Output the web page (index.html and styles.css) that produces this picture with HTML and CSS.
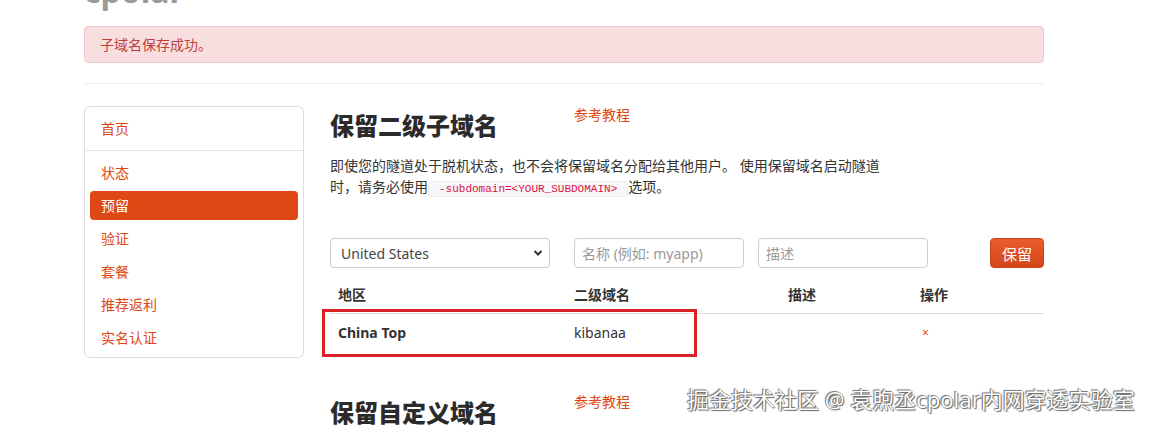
FILE: index.html
```html
<!DOCTYPE html>
<html lang="zh-CN">
<head>
    <meta charset="UTF-8">
    <title>cpolar - 保留</title>
    <link rel="stylesheet" href="styles.css">
</head>
<body>

<div class="container">
    <div class="brand">cpolar</div>

    <div class="alert">子域名保存成功。</div>

    <hr class="divider">

    <div class="row">
        <div class="sidebar">
            <a class="side-home" href="#">首页</a>
            <div class="side-list">
                <a class="side-item" href="#">状态</a>
                <a class="side-item active" href="#">预留</a>
                <a class="side-item" href="#">验证</a>
                <a class="side-item" href="#">套餐</a>
                <a class="side-item" href="#">推荐返利</a>
                <a class="side-item" href="#">实名认证</a>
            </div>
        </div>

        <div class="main">
            <div class="title-row">
                <h2>保留二级子域名</h2>
                <a class="guide" href="#">参考教程</a>
            </div>
            <p class="intro">即使您的隧道处于脱机状态，也不会将保留域名分配给其他用户。 使用保留域名启动隧道时，请务必使用<code>-subdomain=&lt;YOUR_SUBDOMAIN&gt;</code>选项。</p>

            <div class="form-row">
                <div class="select-wrap">
                    <select class="region">
                        <option>United States</option>
                        <option>China Top</option>
                        <option>China VIP</option>
                    </select>
                    <svg class="chevron" width="10" height="8" viewBox="0 0 10 8">
                        <path d="M1.5 2 L5 5.5 L8.5 2" fill="none" stroke="#333" stroke-width="2"/>
                    </svg>
                </div>
                <input class="field name" type="text" placeholder="名称 (例如: myapp)">
                <input class="field desc" type="text" placeholder="描述">
                <button class="btn-save">保留</button>
            </div>

            <div class="table-wrap">
                <table class="domains">
                    <thead>
                        <tr>
                            <th class="col-region">地区</th>
                            <th class="col-name">二级域名</th>
                            <th class="col-desc">描述</th>
                            <th>操作</th>
                        </tr>
                    </thead>
                    <tbody>
                        <tr>
                            <td><strong>China Top</strong></td>
                            <td>kibanaa</td>
                            <td></td>
                            <td><a class="remove" href="#">×</a></td>
                        </tr>
                    </tbody>
                </table>
                <div class="highlight"></div>
            </div>

            <div class="title-row second">
                <h2>保留自定义域名</h2>
                <a class="guide" href="#">参考教程</a>
            </div>
        </div>
    </div>
</div>

<div class="watermark">掘金技术社区 @ 袁煦丞cpolar内网穿透实验室</div>

</body>
</html>
```

FILE: styles.css
```css
html, body {
    overflow: hidden;
}

body {
    margin: 0;
    font-family: "Noto Sans", "Noto Sans CJK SC", sans-serif;
    font-size: 14px;
    line-height: 20px;
    color: #333;
    background-color: #fff;
}

a {
    color: #dd4814;
    text-decoration: none;
}

.container {
    width: 960px;
    margin-left: 84px;
}

.brand {
    height: 32px;
    margin-top: -25px;
    font-size: 32px;
    line-height: 32px;
    font-weight: bold;
    color: #9a9a9a;
}

.alert {
    margin-top: 19px;
    padding: 8px 35px 8px 15px;
    line-height: 19px;
    background-color: #f8dede;
    border: 1px solid #efc9cf;
    border-radius: 4px;
    color: #c0403a;
}

.divider {
    margin: 20px 0 0;
    border: 0;
    border-top: 1px solid #f0f0f0;
    height: 0;
}

.row {
    display: flex;
    margin-top: 22px;
}

/* menu on the left */
.sidebar {
    width: 218px;
    border: 1px solid #ddd;
    border-radius: 6px;
    align-self: flex-start;
}

.side-home {
    display: block;
    height: 43px;
    line-height: 43px;
    padding-left: 16px;
    border-bottom: 1px solid #e5e5e5;
}

.side-list {
    padding: 7px 5px 5px;
}

.side-item {
    display: block;
    height: 29px;
    line-height: 29px;
    padding-left: 11px;
    margin-bottom: 4px;
    border-radius: 4px;
}

.side-item:last-child {
    margin-bottom: 0;
}

.side-item.active {
    background-color: #dd4814;
    color: #fff;
}

.main {
    width: 714px;
    margin-left: 26px;
}

.title-row {
    display: flex;
    align-items: flex-start;
}

.title-row h2 {
    width: 244px;
    margin: 0;
    font-size: 24px;
    line-height: 40px;
    font-weight: 900;
    color: #2b2b2b;
}

.title-row .guide {
    margin-top: -1px;
}

.title-row.second {
    margin-top: 42px;
}

.intro {
    width: 560px;
    margin: 9px 0 0;
    line-height: 21px;
}

.intro code {
    padding: 1px 10px;
    font-family: "Liberation Mono", monospace;
    font-size: 11px;
    color: #d14;
    background-color: #f7f7f9;
    border: 1px solid #ececf0;
    border-radius: 3px;
}

/* add form */
.form-row {
    display: flex;
    align-items: center;
    margin-top: 38px;
    height: 30px;
}

.select-wrap {
    position: relative;
    width: 220px;
    height: 30px;
}

.region {
    width: 220px;
    height: 30px;
    padding: 0 10px;
    font-family: "Noto Sans", "Noto Sans CJK SC", sans-serif;
    font-size: 14px;
    color: #444;
    background-color: #fff;
    border: 1px solid #ccc;
    border-radius: 4px;
    -webkit-appearance: none;
    appearance: none;
}

.chevron {
    position: absolute;
    right: 7px;
    top: 11px;
    pointer-events: none;
}

.field {
    box-sizing: border-box;
    width: 170px;
    height: 30px;
    padding: 0 7px;
    font-family: "Noto Sans", "Noto Sans CJK SC", sans-serif;
    font-size: 14px;
    border: 1px solid #ccc;
    border-radius: 4px;
}

.field::placeholder {
    color: #999;
}

.field.name {
    margin-left: 24px;
}

.field.desc {
    margin-left: 14px;
}

.btn-save {
    width: 55px;
    height: 30px;
    margin-left: 62px;
    padding: 0;
    font-family: "Noto Sans", "Noto Sans CJK SC", sans-serif;
    font-size: 15px;
    color: #fff;
    background: linear-gradient(#ea5d2b, #d3461a);
    border: 1px solid #c9441a;
    border-radius: 4px;
    cursor: pointer;
}

/* table */
.table-wrap {
    position: relative;
    margin-top: 9px;
}

.domains {
    width: 100%;
    border-collapse: collapse;
}

.domains th, .domains td {
    padding: 8px;
    line-height: 20px;
    text-align: left;
}

.domains th {
    font-weight: bold;
}

.domains td {
    border-top: 1px solid #ddd;
}

.col-region {
    width: 220px;
}

.col-name {
    width: 198px;
}

.col-desc {
    width: 116px;
}

.remove {
    font-size: 12px;
    padding-left: 2px;
}

.highlight {
    position: absolute;
    left: -8px;
    top: 32px;
    width: 369px;
    height: 42px;
    border: 3px solid #db2228;
}

.watermark {
    position: absolute;
    left: 687px;
    top: 385px;
    font-size: 22px;
    line-height: 28px;
    color: #fff;
    text-shadow: 0 0 1px #555, 1px 1px 1px #666, -1px -1px 1px #777;
    white-space: nowrap;
}
```
